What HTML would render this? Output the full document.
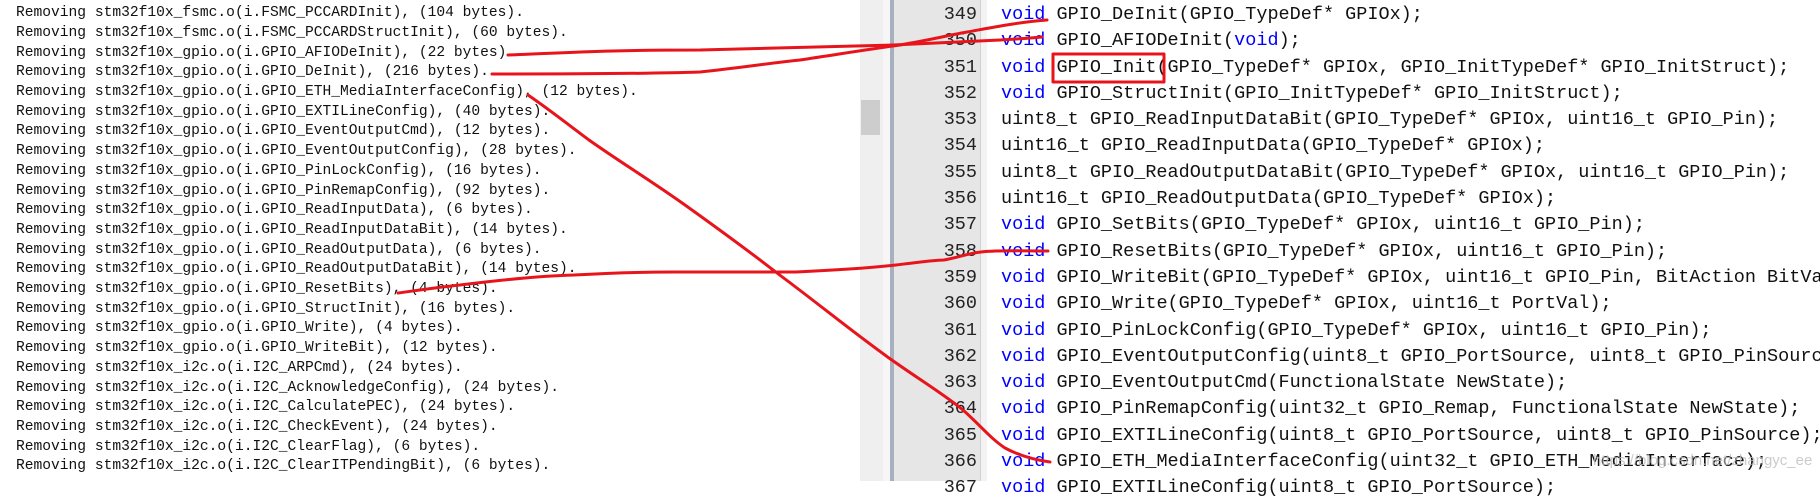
<!DOCTYPE html>
<html><head><meta charset="utf-8"><style>
body{margin:0;width:1820px;height:481px;overflow:hidden;background:#fff;position:relative;font-family:"Liberation Mono",monospace}
.l{position:absolute;left:16px;top:-15.5px;margin:0;font-size:14.6px;line-height:19.7px;color:#111;white-space:pre}
.track{position:absolute;left:860px;top:0;width:23px;height:481px;background:#efefef}
.thumb{position:absolute;left:861px;top:100px;width:19px;height:35px;background:#cdcdcd}
.sep1{position:absolute;left:883px;top:0;width:7px;height:481px;background:#f6f6f6}
.sep2{position:absolute;left:890px;top:0;width:4px;height:481px;background:#a7b0bf}
.gut{position:absolute;left:894px;top:0;width:86px;height:481px;background:#e6e6e6}
.sep3{position:absolute;left:980px;top:0;width:6px;height:481px;background:#f3f3f3;border-left:1px solid #d0d0d0}
.n{position:absolute;left:894px;width:83px;top:2px;margin:0;text-align:right;font-size:18.5px;line-height:26.3px;color:#222;white-space:pre}
.c{position:absolute;left:1001px;top:2px;margin:0;font-size:18.5px;line-height:26.3px;color:#111;white-space:pre}
.k{color:#0000ff}
.wm{position:absolute;left:1593px;top:452px;font-family:"Liberation Sans",sans-serif;font-size:15px;color:rgba(190,190,190,.8)}
svg{position:absolute;left:0;top:0}
</style></head><body>
<pre class="l">Removing stm32f10x_fsmc.o(i.FSMC_NORSRAMStructInit), (48 bytes).
Removing stm32f10x_fsmc.o(i.FSMC_PCCARDInit), (104 bytes).
Removing stm32f10x_fsmc.o(i.FSMC_PCCARDStructInit), (60 bytes).
Removing stm32f10x_gpio.o(i.GPIO_AFIODeInit), (22 bytes).
Removing stm32f10x_gpio.o(i.GPIO_DeInit), (216 bytes).
Removing stm32f10x_gpio.o(i.GPIO_ETH_MediaInterfaceConfig), (12 bytes).
Removing stm32f10x_gpio.o(i.GPIO_EXTILineConfig), (40 bytes).
Removing stm32f10x_gpio.o(i.GPIO_EventOutputCmd), (12 bytes).
Removing stm32f10x_gpio.o(i.GPIO_EventOutputConfig), (28 bytes).
Removing stm32f10x_gpio.o(i.GPIO_PinLockConfig), (16 bytes).
Removing stm32f10x_gpio.o(i.GPIO_PinRemapConfig), (92 bytes).
Removing stm32f10x_gpio.o(i.GPIO_ReadInputData), (6 bytes).
Removing stm32f10x_gpio.o(i.GPIO_ReadInputDataBit), (14 bytes).
Removing stm32f10x_gpio.o(i.GPIO_ReadOutputData), (6 bytes).
Removing stm32f10x_gpio.o(i.GPIO_ReadOutputDataBit), (14 bytes).
Removing stm32f10x_gpio.o(i.GPIO_ResetBits), (4 bytes).
Removing stm32f10x_gpio.o(i.GPIO_StructInit), (16 bytes).
Removing stm32f10x_gpio.o(i.GPIO_Write), (4 bytes).
Removing stm32f10x_gpio.o(i.GPIO_WriteBit), (12 bytes).
Removing stm32f10x_i2c.o(i.I2C_ARPCmd), (24 bytes).
Removing stm32f10x_i2c.o(i.I2C_AcknowledgeConfig), (24 bytes).
Removing stm32f10x_i2c.o(i.I2C_CalculatePEC), (24 bytes).
Removing stm32f10x_i2c.o(i.I2C_CheckEvent), (24 bytes).
Removing stm32f10x_i2c.o(i.I2C_ClearFlag), (6 bytes).
Removing stm32f10x_i2c.o(i.I2C_ClearITPendingBit), (6 bytes).</pre>
<div class="track"></div><div class="thumb"></div>
<div class="sep1"></div><div class="sep2"></div><div class="gut"></div><div class="sep3"></div>
<pre class="n">349
350
351
352
353
354
355
356
357
358
359
360
361
362
363
364
365
366
367</pre>
<pre class="c"><span class="k">void</span> GPIO_DeInit(GPIO_TypeDef* GPIOx);
<span class="k">void</span> GPIO_AFIODeInit(<span class="k">void</span>);
<span class="k">void</span> GPIO_Init(GPIO_TypeDef* GPIOx, GPIO_InitTypeDef* GPIO_InitStruct);
<span class="k">void</span> GPIO_StructInit(GPIO_InitTypeDef* GPIO_InitStruct);
uint8_t GPIO_ReadInputDataBit(GPIO_TypeDef* GPIOx, uint16_t GPIO_Pin);
uint16_t GPIO_ReadInputData(GPIO_TypeDef* GPIOx);
uint8_t GPIO_ReadOutputDataBit(GPIO_TypeDef* GPIOx, uint16_t GPIO_Pin);
uint16_t GPIO_ReadOutputData(GPIO_TypeDef* GPIOx);
<span class="k">void</span> GPIO_SetBits(GPIO_TypeDef* GPIOx, uint16_t GPIO_Pin);
<span class="k">void</span> GPIO_ResetBits(GPIO_TypeDef* GPIOx, uint16_t GPIO_Pin);
<span class="k">void</span> GPIO_WriteBit(GPIO_TypeDef* GPIOx, uint16_t GPIO_Pin, BitAction BitVal);
<span class="k">void</span> GPIO_Write(GPIO_TypeDef* GPIOx, uint16_t PortVal);
<span class="k">void</span> GPIO_PinLockConfig(GPIO_TypeDef* GPIOx, uint16_t GPIO_Pin);
<span class="k">void</span> GPIO_EventOutputConfig(uint8_t GPIO_PortSource, uint8_t GPIO_PinSource);
<span class="k">void</span> GPIO_EventOutputCmd(FunctionalState NewState);
<span class="k">void</span> GPIO_PinRemapConfig(uint32_t GPIO_Remap, FunctionalState NewState);
<span class="k">void</span> GPIO_EXTILineConfig(uint8_t GPIO_PortSource, uint8_t GPIO_PinSource);
<span class="k">void</span> GPIO_ETH_MediaInterfaceConfig(uint32_t GPIO_ETH_MediaInterface);
<span class="k">void</span> GPIO_EXTILineConfig(uint8_t GPIO_PortSource);</pre>
<div class="wm">https://blog.csdn.net/zhangyc_ee</div>
<svg width="1820" height="481" viewBox="0 0 1820 481">
<g fill="none" stroke="#e8141c" stroke-width="3" stroke-linecap="round" stroke-linejoin="round">
<rect x="1053" y="54" width="111" height="28"/>
<path d="M508,55 C540,54 570,52 613,51 C650,50 680,50 700,50 C790,48 850,46 893,45 C940,43 975,41 1000,40 C1020,39 1030,38 1042,37"/>
<path d="M492,74 C560,74 640,74 700,72 C740,68 770,63 800,60 C840,54 870,49 900,45 C930,40 950,35 967,32 C995,27 1020,22 1047,20"/>
<path d="M528,95 C550,110 570,126 589,140 C620,162 650,180 685,205 C720,230 750,252 781,276 C820,305 850,330 889,358 C920,380 945,395 963,410 C980,425 990,438 1005,448 C1020,456 1035,460 1050,462"/>
<path d="M398,293 C420,290 440,287 460,285 C500,280 540,276 574,275 C610,273 640,272 674,272 L796,272 C840,270 870,268 896,265 C920,262 935,260 944,260 C960,257 970,253 981,252 C1000,250 1020,251 1048,251"/>
</g></svg>
</body></html>
